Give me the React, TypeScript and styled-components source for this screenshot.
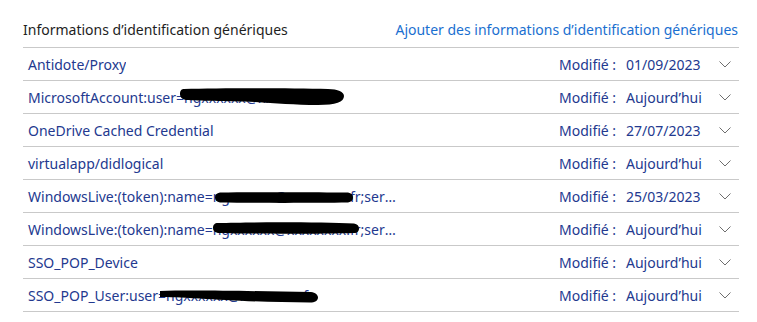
import styled, { createGlobalStyle } from "styled-components";

const GlobalStyle = createGlobalStyle`
  html, body {
    margin: 0;
    padding: 0;
    background: #ffffff;
  }
  body {
    font-family: "Noto Sans", "Open Sans", sans-serif;
  }
`;

const Panel = styled.div`
  width: 716px;
  margin-left: 23px;
`;

const Header = styled.div`
  height: 47px;
  display: flex;
  align-items: flex-end;
  justify-content: space-between;
  border-bottom: 1px solid #c9c9c9;
`;

const Title = styled.div`
  font-size: 14px;
  color: #1e1e1e;
  line-height: 20px;
  padding-bottom: 7px;
`;

const AddLink = styled.a`
  font-size: 14px;
  color: #1a6fd0;
  line-height: 20px;
  padding-bottom: 7px;
  padding-right: 1px;
  text-decoration: none;
  cursor: pointer;
`;

const Row = styled.div`
  height: 32px;
  display: grid;
  grid-template-columns: 1fr 67px 80px 33px;
  align-items: center;
  border-bottom: 1px solid #c9c9c9;
  font-size: 14px;
  color: #23398f;
`;

const NameCell = styled.div`
  position: relative;
  align-self: stretch;
  display: flex;
  align-items: center;
`;

const NameText = styled.span`
  padding-left: 5px;
  max-width: 369px;
  white-space: nowrap;
  overflow: hidden;
  text-overflow: ellipsis;
`;

const Label = styled.span``;

const Value = styled.span``;

const Toggle = styled.span`
  display: flex;
  align-items: center;
  justify-content: flex-end;
  padding-right: 8px;
  color: #6e6e6e;
`;

const Scribble = styled.svg<{ $left: number; $top: number }>`
  position: absolute;
  left: ${(p) => p.$left}px;
  top: ${(p) => p.$top}px;
  pointer-events: none;
`;

type Blob = { left: number; top: number; w: number; h: number; d: string };

type Entry = { name: string; modified: string; blob?: Blob };

const entries: Entry[] = [
  { name: "Antidote/Proxy", modified: "01/09/2023" },
  {
    name: "MicrosoftAccount:user=ngxxxxxx@xxxxxx.fr",
    modified: "Aujourd’hui",
    blob: {
      left: 157,
      top: 7,
      w: 164,
      h: 18,
      d: "M4,1 C40,0 110,0 148,1 C158,1 164,4 164,8 C164,14 156,17 138,17 C115,17 95,15 75,14 C45,13 18,13 6,12 C1,11 0,8 0,6 C0,2 2,1 4,1 Z",
    },
  },
  { name: "OneDrive Cached Credential", modified: "27/07/2023" },
  { name: "virtualapp/didlogical", modified: "Aujourd’hui" },
  {
    name: "WindowsLive:(token):name=ngxxxxxx@xxxxxxxx.fr;serviceuri=*",
    modified: "25/03/2023",
    blob: {
      left: 192,
      top: 12,
      w: 138,
      h: 11,
      d: "M5,0.5 C40,0 100,0 133,0.5 C136.5,1 138,3 138,5.5 C138,8 136.5,10 133,10.5 C100,11 40,11 5,10.5 C1.5,10 0,8 0,5.5 C0,3 1.5,1 5,0.5 Z",
    },
  },
  {
    name: "WindowsLive:(token):name=ngxxxxxx@xxxxxxxx.fr;serviceuri=*",
    modified: "Aujourd’hui",
    blob: {
      left: 190,
      top: 9,
      w: 146,
      h: 12,
      d: "M5,1 C40,0 110,0 141,1.5 C144.5,2 146,4 146,6.5 C146,9 144.5,11 141,11 C110,12 40,12 5,11 C1.5,10.5 0,8.5 0,6 C0,3 1.5,1 5,1 Z",
    },
  },
  { name: "SSO_POP_Device", modified: "Aujourd’hui" },
  {
    name: "SSO_POP_User:user=ngxxxxxx@xxxxxxxx.fr",
    modified: "Aujourd’hui",
    blob: {
      left: 137,
      top: 10,
      w: 158,
      h: 15,
      d: "M0,2 C30,1 90,2 151,3 C155.5,3.5 158,6 158,8.5 C158,11.5 155,13.5 150,13.5 C110,13.5 70,11.5 40,9.5 C20,8.5 8,8 0,8 Z",
    },
  },
];

function Chevron() {
  return (
    <svg width="12" height="7" viewBox="0 0 12 7">
      <path d="M0.5 0.5 L6 6 L11.5 0.5" fill="none" stroke="currentColor" strokeWidth="1" />
    </svg>
  );
}

export default function App() {
  return (
    <>
      <GlobalStyle />
      <Panel>
        <Header>
          <Title>Informations d’identification génériques</Title>
          <AddLink>Ajouter des informations d’identification génériques</AddLink>
        </Header>
        {entries.map((e, i) => (
          <Row key={i}>
            <NameCell>
              <NameText>{e.name}</NameText>
              {e.blob && (
                <Scribble
                  $left={e.blob.left}
                  $top={e.blob.top}
                  width={e.blob.w}
                  height={e.blob.h}
                  viewBox={`0 0 ${e.blob.w} ${e.blob.h}`}
                >
                  <path d={e.blob.d} fill="#000" />
                </Scribble>
              )}
            </NameCell>
            <Label>Modifié :</Label>
            <Value>{e.modified}</Value>
            <Toggle>
              <Chevron />
            </Toggle>
          </Row>
        ))}
      </Panel>
    </>
  );
}
